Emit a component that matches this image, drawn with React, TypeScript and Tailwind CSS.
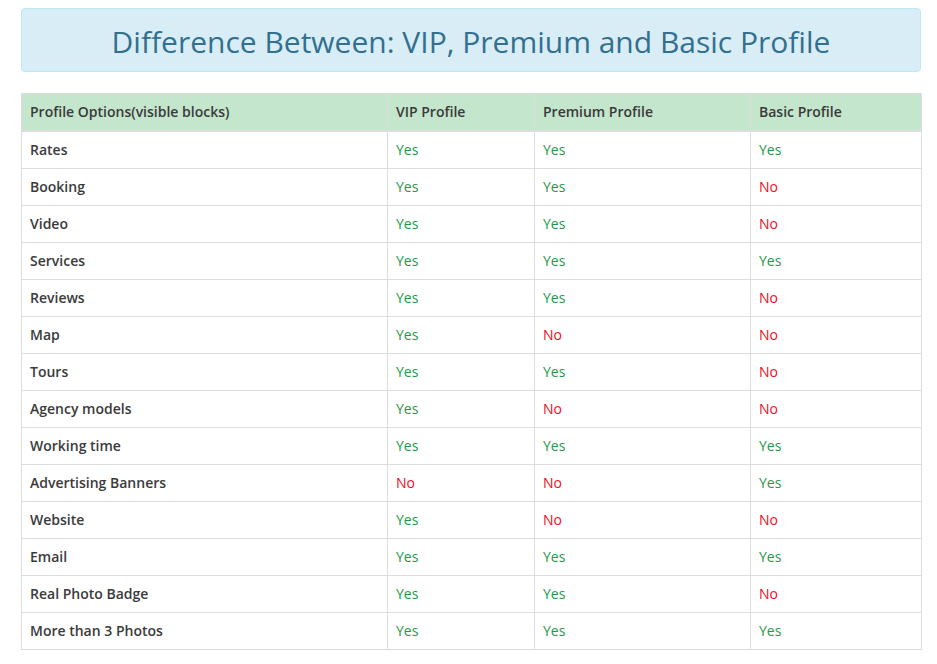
const rows: [string, boolean, boolean, boolean][] = [
  ["Rates", true, true, true],
  ["Booking", true, true, false],
  ["Video", true, true, false],
  ["Services", true, true, true],
  ["Reviews", true, true, false],
  ["Map", true, false, false],
  ["Tours", true, true, false],
  ["Agency models", true, false, false],
  ["Working time", true, true, true],
  ["Advertising Banners", false, false, true],
  ["Website", true, false, false],
  ["Email", true, true, true],
  ["Real Photo Badge", true, true, false],
  ["More than 3 Photos", true, true, true],
];

const Mark = ({ ok }: { ok: boolean }) =>
  ok ? <span className="text-[#1e9a48]">Yes</span> : <span className="text-[#f00c1c]">No</span>;

export default function App() {
  return (
    <div className="min-h-screen bg-white pl-[21px] pt-2 font-['Open_Sans',sans-serif] text-[14px] leading-5 text-[#3a3a3a]">
      <div className="flex h-16 w-[900px] items-center justify-center rounded border border-[#bce8f1] bg-[#d9edf7] pt-1">
        <h1 className="text-[30px] leading-9 font-normal text-[#31708f]">
          Difference Between: VIP, Premium and Basic Profile
        </h1>
      </div>

      <table className="mt-[21px] w-[900px] table-fixed border-collapse border border-[#ddd]">
        <colgroup>
          <col className="w-[366px]" />
          <col className="w-[147px]" />
          <col className="w-[216px]" />
          <col className="w-[171px]" />
        </colgroup>
        <thead>
          <tr className="bg-[#c4e6cc] text-left">
            <th className="border-b-2 border-[#ddd] px-2 py-2 font-semibold">Profile Options(visible blocks)</th>
            <th className="border-b-2 border-l border-[#ddd] px-2 py-2 font-semibold">VIP Profile</th>
            <th className="border-b-2 border-l border-[#ddd] px-2 py-2 font-semibold">Premium Profile</th>
            <th className="border-b-2 border-l border-[#ddd] px-2 py-2 font-semibold">Basic Profile</th>
          </tr>
        </thead>
        <tbody>
          {rows.map(([name, vip, premium, basic]) => (
            <tr key={name}>
              <td className="border border-[#ddd] px-2 py-2 font-semibold">{name}</td>
              <td className="border border-[#ddd] px-2 py-2"><Mark ok={vip} /></td>
              <td className="border border-[#ddd] px-2 py-2"><Mark ok={premium} /></td>
              <td className="border border-[#ddd] px-2 py-2"><Mark ok={basic} /></td>
            </tr>
          ))}
        </tbody>
      </table>
    </div>
  );
}
